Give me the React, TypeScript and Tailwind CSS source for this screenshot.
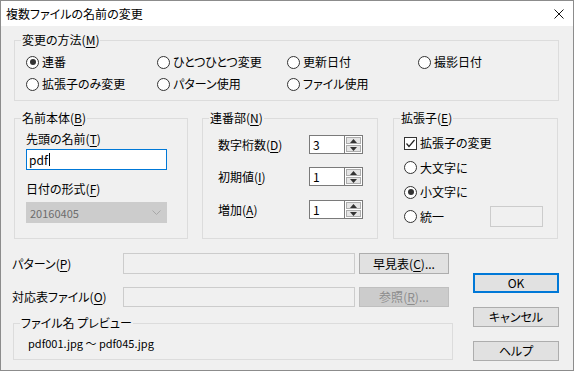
import type { ReactNode } from "react";

function Key({ k }: { k: string }) {
  return (
    <>
      (<span className="underline underline-offset-2">{k}</span>)
    </>
  );
}

function Group({ label, className, children }: { label: ReactNode; className: string; children?: ReactNode }) {
  return (
    <div className={"relative border border-[#dcdcdc] " + className}>
      <span className="absolute left-[6px] top-[-8px] bg-[#f0f0f0] px-[1px] leading-[14px]">{label}</span>
      {children}
    </div>
  );
}

function Radio({ label, checked }: { label: ReactNode; checked?: boolean }) {
  return (
    <div className="flex items-center gap-[3px]">
      <span className="flex size-[13px] shrink-0 items-center justify-center rounded-full border border-[#333333] bg-white">
        {checked && <span className="size-[6px] rounded-full bg-[#333333]" />}
      </span>
      <span>{label}</span>
    </div>
  );
}

function Spin({ value }: { value: string }) {
  return (
    <div className="flex h-[19px] w-[54px]">
      <div className="flex h-full w-[36px] items-center border border-[#7a7a7a] bg-white pl-[3px]">{value}</div>
      <div className="flex w-[18px] flex-col gap-[1px] border-y border-r border-[#7a7a7a] bg-white p-[1px]">
        <div className="flex flex-1 items-center justify-center border border-[#adadad] bg-[#e5e5e5]">
          <svg width="7" height="4" viewBox="0 0 7 4">
            <polygon points="3.5,0 7,4 0,4" fill="#333" />
          </svg>
        </div>
        <div className="flex flex-1 items-center justify-center border border-[#adadad] bg-[#e5e5e5]">
          <svg width="7" height="4" viewBox="0 0 7 4">
            <polygon points="0,0 7,0 3.5,4" fill="#333" />
          </svg>
        </div>
      </div>
    </div>
  );
}

function Button({ children, className, disabled }: { children: ReactNode; className: string; disabled?: boolean }) {
  return (
    <div
      className={
        "flex items-center justify-center " +
        (disabled ? "border border-[#bfbfbf] bg-[#cccccc] text-[#8d8d8d] " : "border border-[#adadad] bg-[#e1e1e1] ") +
        className
      }
    >
      {children}
    </div>
  );
}

export default function App() {
  return (
    <div className="flex h-[371px] w-[574px] flex-col border border-[#8c8c8c] bg-[#f0f0f0] font-['Noto_Sans_CJK_JP','Noto_Sans',sans-serif] text-[12px] leading-[14px] text-black [font-feature-settings:'palt']">
      {/* title bar */}
      <div className="flex h-[25px] shrink-0 items-center justify-between bg-white pl-[5px] pr-[9px]">
        <span>複数ファイルの名前の変更</span>
        <svg width="10" height="10" viewBox="0 0 10 10">
          <path d="M0.5 0.5 L9.5 9.5 M9.5 0.5 L0.5 9.5" stroke="#111" strokeWidth="1" />
        </svg>
      </div>

      <div className="flex flex-1 flex-col">
        <Group label={<>変更の方法<Key k="M" /></>} className="ml-[13px] mt-[14px] h-[61px] w-[545px]">
          <div className="grid auto-rows-[22px] grid-cols-[131px_130px_131px_1fr] items-center pl-[11px] pt-[10px]">
            <Radio label="連番" checked />
            <Radio label="ひとつひとつ変更" />
            <Radio label="更新日付" />
            <Radio label="撮影日付" />
            <Radio label="拡張子のみ変更" />
            <Radio label="パターン使用" />
            <Radio label="ファイル使用" />
          </div>
        </Group>

        <div className="ml-[13px] mt-[17px] flex">
          <Group label={<>名前本体<Key k="B" /></>} className="flex h-[121px] w-[174px] flex-col pl-[11px] pt-[13px]">
            <div className="h-[14px]">
              先頭の名前<Key k="T" />
            </div>
            <div className="mt-[3px] flex h-[21px] w-[141px] items-center border border-[#0078d7] bg-white pl-[2px]">
              pdf
              <span className="ml-[1px] h-[13px] w-[1px] bg-black" />
            </div>
            <div className="mt-[12px] h-[14px]">
              日付の形式<Key k="F" />
            </div>
            <div className="mt-[6px] flex h-[21px] w-[141px] items-center justify-between border border-[#cccccc] bg-[#cccccc] pl-[3px] pr-[5px] text-[11px] text-[#6d6d6d]">
              <span>20160405</span>
              <svg width="9" height="5" viewBox="0 0 9 5">
                <path d="M0.5 0.5 L4.5 4.5 L8.5 0.5" fill="none" stroke="#a8a8a8" strokeWidth="1" />
              </svg>
            </div>
          </Group>

          <Group label={<>連番部<Key k="N" /></>} className="ml-[14px] flex h-[121px] w-[176px] flex-col pl-[15px] pt-[16px]">
            <div className="flex h-[19px] items-center">
              <span className="w-[91px]">
                数字桁数<Key k="D" />
              </span>
              <Spin value="3" />
            </div>
            <div className="mt-[13px] flex h-[19px] items-center">
              <span className="w-[91px]">
                初期値<Key k="I" />
              </span>
              <Spin value="1" />
            </div>
            <div className="mt-[14px] flex h-[19px] items-center">
              <span className="w-[91px]">
                増加<Key k="A" />
              </span>
              <Spin value="1" />
            </div>
          </Group>

          <Group label={<>拡張子<Key k="E" /></>} className="ml-[15px] flex h-[121px] w-[165px] flex-col pl-[10px] pt-[12px]">
            <div className="flex h-[24px] items-center gap-[3px]">
              <span className="flex size-[13px] items-center justify-center border border-[#333333] bg-white">
                <svg width="11" height="11" viewBox="0 0 11 11">
                  <path d="M1.5 5.5 L4 8.5 L9.5 2" fill="none" stroke="#222" strokeWidth="1.2" />
                </svg>
              </span>
              <span>拡張子の変更</span>
            </div>
            <div className="flex h-[25px] items-center">
              <Radio label="大文字に" />
            </div>
            <div className="flex h-[24px] items-center">
              <Radio label="小文字に" checked />
            </div>
            <div className="flex h-[25px] items-center">
              <div className="w-[86px]">
                <Radio label="統一" />
              </div>
              <div className="h-[21px] w-[53px] border border-[#cccccc] bg-[#f0f0f0]" />
            </div>
          </Group>
        </div>

        <div className="flex">
          <div className="ml-[11px] mt-[14px] flex w-[441px] flex-col">
            <div className="flex h-[21px] items-center">
              <span className="w-[111px]">
                パターン<Key k="P" />
              </span>
              <div className="h-[21px] w-[232px] border border-[#cccccc] bg-[#f0f0f0]" />
              <Button className="ml-[4px] h-[21px] w-[90px]">
                早見表<Key k="C" />...
              </Button>
            </div>
            <div className="mt-[13px] flex h-[20px] items-center">
              <span className="w-[111px]">
                対応表ファイル<Key k="O" />
              </span>
              <div className="h-[20px] w-[232px] border border-[#cccccc] bg-[#f0f0f0]" />
              <Button className="ml-[4px] h-[20px] w-[90px]" disabled>
                参照<Key k="R" />...
              </Button>
            </div>
            <Group label="ファイル名 プレビュー" className="ml-[1px] mt-[16px] h-[37px] w-[440px] pl-[14px] pt-[12px]">
              <div className="h-[14px] text-[11px]">pdf001.jpg ～ pdf045.jpg</div>
            </Group>
          </div>

          <div className="ml-[20px] mt-[34px] flex flex-col">
            <div className="flex h-[20px] w-[86px] items-center justify-center border-2 border-[#0078d7] bg-[#e1e1e1]">OK</div>
            <Button className="mt-[14px] h-[20px] w-[86px]">キャンセル</Button>
            <Button className="mt-[14px] h-[20px] w-[86px]">ヘルプ</Button>
          </div>
        </div>
      </div>
    </div>
  );
}
